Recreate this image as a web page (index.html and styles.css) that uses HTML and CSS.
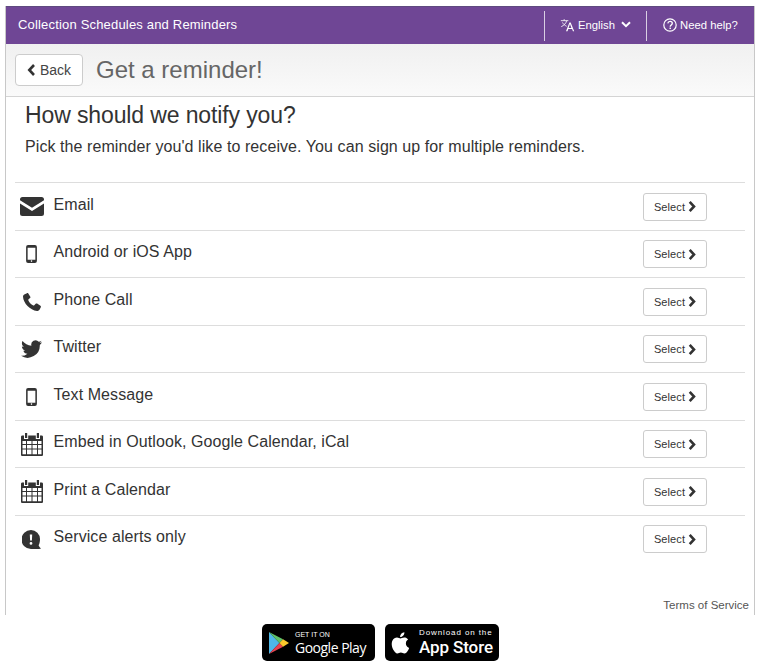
FILE: index.html
```html
<!DOCTYPE html>
<html lang="en">
<head>
<meta charset="utf-8">
<title>Get a reminder</title>
<link rel="stylesheet" href="styles.css">
</head>
<body>
<svg class="defs" width="0" height="0" aria-hidden="true">
  <symbol id="phone-device" viewBox="0 0 12 20"><path fill-rule="evenodd" d="M2.2 0h7.6A2.2 2.2 0 0 1 12 2.2v15.6A2.2 2.2 0 0 1 9.800 20H2.200A2.200 2.200 0 0 1 0 17.800V2.200A2.200 2.200 0 0 1 2.200 0ZM1.700 3v13.300h8.600V3ZM6 17a.9.900 0 1 0 0 1.800A.9.900 0 0 0 6 17Z"/></symbol>
</svg>

<main class="card">
  <header class="topbar">
    <span class="brand">Collection Schedules and Reminders</span>
    <div class="topnav">
      <span class="topnav-item lang">
        <svg class="ico-lang" viewBox="0 0 18 16"><g fill="none" stroke="#fff" stroke-width="1"><path d="M1 2.800h9M5 1v1.800M8 2.800C7.300 6 4.800 8.500 1.500 10M3 5c1 2 2.800 3.500 5 4.500"/></g><path fill="#fff" d="M11.300 5h1.500l4.200 10.500h-1.500l-1-2.700h-4.500l-1 2.700H7.200Zm.7 1.800-1.700 4.800h3.400Z"/></svg>
        English
        <svg class="ico-chev" viewBox="0 0 10 7"><path d="M1 1.300 5 5.200l4-3.900" fill="none" stroke="#fff" stroke-width="2"/></svg>
      </span>
      <span class="topnav-item help">
        <svg class="ico-help" viewBox="0 0 14 14"><circle cx="7" cy="7" r="6.200" fill="none" stroke="#fff" stroke-width="1.200"/><path d="M4.800 5.300C5 3.900 6 3.300 7.100 3.300c1.300 0 2.200.8 2.200 1.900 0 1.700-2.100 1.800-2.100 3.500" fill="none" stroke="#fff" stroke-width="1.300"/><rect x="6.500" y="9.600" width="1.400" height="1.400" fill="#fff"/></svg>
        Need help?
      </span>
    </div>
  </header>

  <div class="subbar">
    <a class="back-btn"><svg class="ico-back" viewBox="0 0 8 12"><path d="M6.500 1 1.800 6l4.700 5" fill="none" stroke="#333" stroke-width="2.600"/></svg>Back</a>
    <h1 class="page-title">Get a reminder!</h1>
  </div>

  <section class="content">
    <h2 class="question">How should we notify you?</h2>
    <p class="lead">Pick the reminder you'd like to receive. You can sign up for multiple reminders.</p>

    <ul class="options">
      <li class="option">
        <span class="opt-icon"><svg class="i-mail" viewBox="0 0 24 19"><path d="M2.500 0h19A2.500 2.500 0 0 1 24 2.500v.7l-12 7.600L0 3.200v-.7A2.500 2.500 0 0 1 2.500 0Z"/><path d="M0 6.400l12 7.500 12-7.500v10.100a2.500 2.500 0 0 1-2.500 2.500h-19A2.500 2.500 0 0 1 0 16.500Z"/></svg></span>
        <span class="opt-label">Email</span>
        <a class="select-btn">Select<svg class="ico-sel" viewBox="0 0 8 12"><path d="M1.500 1 6.200 6l-4.700 5" fill="none" stroke="#333" stroke-width="2.800"/></svg></a>
      </li>
      <li class="option">
        <span class="opt-icon"><svg class="i-device"><use href="#phone-device"/></svg></span>
        <span class="opt-label">Android or iOS App</span>
        <a class="select-btn">Select<svg class="ico-sel" viewBox="0 0 8 12"><path d="M1.500 1 6.200 6l-4.700 5" fill="none" stroke="#333" stroke-width="2.800"/></svg></a>
      </li>
      <li class="option">
        <span class="opt-icon"><svg class="i-phone" viewBox="0 0 19 19"><path d="M4.200.2 1.300 1.500C.3 2 0 3 0 4c.4 6.800 7.500 14.300 14.800 15 1.100.1 2-.3 2.600-1.200l1.400-2.700c.3-.6.100-1.200-.4-1.600l-3.500-2.300c-.5-.3-1.100-.3-1.500.2l-1.500 1.600c-.3.300-.6.300-1 .2C8.300 12 6.400 9.800 5.600 7.700c-.1-.4 0-.7.300-1l1.500-1.300c.5-.4.600-1 .3-1.500L5.600.6C5.300.1 4.700 0 4.200.2Z"/></svg></span>
        <span class="opt-label">Phone Call</span>
        <a class="select-btn">Select<svg class="ico-sel" viewBox="0 0 8 12"><path d="M1.500 1 6.200 6l-4.700 5" fill="none" stroke="#333" stroke-width="2.800"/></svg></a>
      </li>
      <li class="option">
        <span class="opt-icon"><svg class="i-twitter" viewBox="0 0 24 20"><path d="M24 2.400c-.9.400-1.800.7-2.800.8 1-.6 1.800-1.600 2.200-2.700-1 .6-2 1-3.100 1.200A4.900 4.900 0 0 0 11.900 6.200C7.800 6 4.200 4 1.700.9.400 3.100 1 6 3.200 7.500c-.8 0-1.600-.2-2.200-.6 0 2.300 1.600 4.400 3.900 4.900-.7.200-1.500.2-2.200.1.600 2 2.400 3.400 4.600 3.400A9.900 9.900 0 0 1 0 17.800 14 14 0 0 0 21.500 5.400c1-.7 1.800-1.700 2.500-3Z"/></svg></span>
        <span class="opt-label">Twitter</span>
        <a class="select-btn">Select<svg class="ico-sel" viewBox="0 0 8 12"><path d="M1.500 1 6.200 6l-4.700 5" fill="none" stroke="#333" stroke-width="2.800"/></svg></a>
      </li>
      <li class="option">
        <span class="opt-icon"><svg class="i-device"><use href="#phone-device"/></svg></span>
        <span class="opt-label">Text Message</span>
        <a class="select-btn">Select<svg class="ico-sel" viewBox="0 0 8 12"><path d="M1.500 1 6.200 6l-4.700 5" fill="none" stroke="#333" stroke-width="2.800"/></svg></a>
      </li>
      <li class="option">
        <span class="opt-icon"><svg class="i-cal" viewBox="0 0 22 23"><path d="M4 0h2.200v5H4zM15.800 0H18v5h-2.200z"/><path fill-rule="evenodd" d="M1.300 2.500H3V6h4.200V2.500h7.600V6H19V2.500h1.700c.7 0 1.300.6 1.300 1.300v17.900c0 .7-.6 1.300-1.300 1.300H1.300C.6 23 0 22.400 0 21.700V3.800c0-.7.600-1.300 1.300-1.300ZM1.500 8v3h3.500V8Zm4.500 0v3h4.500V8Zm5.500 0v3H16V8Zm5.500 0v3h3.500V8ZM1.500 12v3.500h3.500V12Zm4.500 0v3.500h4.500V12Zm5.500 0v3.500H16V12Zm5.500 0v3.500h3.500V12ZM1.500 16.500v4.800h3.500v-4.800Zm4.500 0v4.800h4.500v-4.800Zm5.500 0v4.800H16v-4.800Zm5.500 0v4.800h3.500v-4.800Z"/></svg></span>
        <span class="opt-label">Embed in Outlook, Google Calendar, iCal</span>
        <a class="select-btn">Select<svg class="ico-sel" viewBox="0 0 8 12"><path d="M1.500 1 6.200 6l-4.700 5" fill="none" stroke="#333" stroke-width="2.800"/></svg></a>
      </li>
      <li class="option">
        <span class="opt-icon"><svg class="i-cal" viewBox="0 0 22 23"><path d="M4 0h2.200v5H4zM15.800 0H18v5h-2.200z"/><path fill-rule="evenodd" d="M1.300 2.500H3V6h4.200V2.500h7.600V6H19V2.500h1.700c.7 0 1.300.6 1.300 1.300v17.900c0 .7-.6 1.300-1.300 1.300H1.300C.6 23 0 22.400 0 21.700V3.800c0-.7.600-1.300 1.300-1.300ZM1.500 8v3h3.500V8Zm4.500 0v3h4.500V8Zm5.500 0v3H16V8Zm5.500 0v3h3.500V8ZM1.500 12v3.500h3.500V12Zm4.500 0v3.500h4.500V12Zm5.500 0v3.500H16V12Zm5.500 0v3.500h3.500V12ZM1.500 16.500v4.800h3.500v-4.800Zm4.500 0v4.800h4.500v-4.800Zm5.500 0v4.800H16v-4.800Zm5.500 0v4.800h3.500v-4.800Z"/></svg></span>
        <span class="opt-label">Print a Calendar</span>
        <a class="select-btn">Select<svg class="ico-sel" viewBox="0 0 8 12"><path d="M1.500 1 6.200 6l-4.700 5" fill="none" stroke="#333" stroke-width="2.800"/></svg></a>
      </li>
      <li class="option">
        <span class="opt-icon"><svg class="i-alert" viewBox="0 0 19 19"><path fill-rule="evenodd" d="M9 0a9 9 0 0 1 9 9v0c0 2.300-.4 4.500-1.400 6.300.4 1 1.300 2.300 2.400 3.200-.3.300-1 .5-2 .5H9A9 9 0 0 1 9 0Zm-1.200 4.500.3 6h1.800l.3-6ZM9 12a1.400 1.400 0 1 0 0 2.800A1.400 1.400 0 0 0 9 12Z"/></svg></span>
        <span class="opt-label">Service alerts only</span>
        <a class="select-btn">Select<svg class="ico-sel" viewBox="0 0 8 12"><path d="M1.500 1 6.200 6l-4.700 5" fill="none" stroke="#333" stroke-width="2.800"/></svg></a>
      </li>
    </ul>
  </section>

  <footer class="terms">Terms of Service</footer>
</main>

<div class="stores">
  <a class="badge badge-play">
    <svg class="play-logo" viewBox="0 0 22 24">
      <path fill="#4fb8e8" d="M0 0v24L11.500 12Z"/>
      <path fill="#5fc26a" d="M0 0 11.500 12 15.500 8Z"/>
      <path fill="#e8434f" d="M0 24 11.500 12l4 4Z"/>
      <path fill="#fbc92c" d="M15.500 8 22 12l-6.500 4-4-4Z"/>
    </svg>
    <span class="badge-text">
      <span class="play-small">GET IT ON</span>
      <span class="play-big">Google Play</span>
    </span>
  </a>
  <a class="badge badge-apple">
    <svg class="apple-logo" viewBox="2 0 16 20"><path fill="#fff" d="M14.700 10.600c0-2 1.700-3 1.800-3-1-1.400-2.500-1.600-3-1.600-1.300-.1-2.500.8-3.100.8-.7 0-1.700-.8-2.800-.8-1.400 0-2.700.8-3.500 2.100-1.500 2.600-.4 6.400 1.100 8.500.7 1 1.600 2.200 2.700 2.100 1.100 0 1.500-.7 2.800-.7s1.700.7 2.800.7c1.200 0 1.900-1 2.600-2 .8-1.200 1.200-2.300 1.200-2.400 0 0-2.600-.9-2.600-3.700ZM12.600 4.400c.6-.7 1-1.700.9-2.700-.9 0-1.900.6-2.500 1.300-.5.600-1 1.600-.9 2.600 1 .1 2-.5 2.500-1.200Z"/></svg>
    <span class="badge-text">
      <span class="apple-small">Download on the</span>
      <span class="apple-big">App Store</span>
    </span>
  </a>
</div>
</body>
</html>
```

FILE: styles.css
```css
* { box-sizing: border-box; }
html, body { margin: 0; padding: 0; background: #fff; }
body {
  font-family: "Liberation Sans", Arial, sans-serif;
  color: #333;
  padding-top: 6px;
}
.defs { position: absolute; }

.card {
  width: 750px;
  height: 609px;
  margin-left: 5px;
  border: 1px solid #c8c8c8;
  border-bottom: 0;
  border-top: 0;
  display: flex;
  flex-direction: column;
}

.topbar {
  height: 38px;
  background: #6f4695;
  border-top: 1px solid #5f4a80;
  color: #fff;
  display: flex;
  align-items: center;
  justify-content: space-between;
  padding-left: 12px;
  flex: none;
}
.brand { font-size: 13px; letter-spacing: .18px; padding-bottom: 2px; }
.topnav { display: flex; height: 30px; font-size: 11.3px; }
.topnav-item {
  display: flex;
  align-items: center;
  border-left: 1px solid #d9cfe3;
  padding-bottom: 2px;
}
.lang { width: 102px; padding-left: 15px; gap: 3px; }
.help { width: 108px; padding-left: 16px; gap: 3px; }
.ico-lang { width: 15px; height: 14px; }
.ico-chev { width: 10px; height: 7px; margin-left: 3px; }
.ico-help { width: 14px; height: 14px; }

.subbar {
  height: 53px;
  flex: none;
  background: linear-gradient(#f0f0f0, #fafafa);
  border-bottom: 1px solid #d4d4d4;
  display: flex;
  align-items: center;
  padding: 0 0 1px 9px;
  gap: 13px;
}
.back-btn {
  width: 68px;
  height: 32px;
  background: #fff;
  border: 1px solid #ccc;
  border-radius: 4px;
  font-size: 14px;
  color: #444;
  display: flex;
  align-items: center;
  justify-content: center;
  gap: 4px;
}
.ico-back { width: 9px; height: 12px; }
.page-title {
  margin: 0;
  font-size: 24px;
  font-weight: 400;
  color: #666;
}

.content { padding: 0 9px; flex: 1; }
.question {
  margin: 3px 0 0 10px;
  font-size: 23px;
  letter-spacing: -.12px;
  line-height: 30px;
  font-weight: 400;
  color: #333;
}
.lead {
  margin: 6px 0 0 10px;
  font-size: 16px;
  letter-spacing: .08px;
  line-height: 22px;
  color: #333;
}

.options {
  list-style: none;
  margin: 24px 0 0;
  padding: 0;
}
.option {
  height: 47.500px;
  border-top: 1px solid #ddd;
  display: flex;
  align-items: flex-start;
}
.opt-icon {
  width: 38.500px;
  height: 46px;
  flex: none;
  display: flex;
  align-items: center;
  justify-content: center;
  padding: 1px 5px 0 0;
}
.opt-icon svg { fill: #333; display: block; }
.i-mail { width: 24px; height: 19px; }
.i-device { width: 11px; height: 18px; }
.i-phone { width: 18px; height: 18px; }
.i-twitter { width: 21px; height: 18px; }
.i-cal { width: 22px; height: 23px; }
.i-alert { width: 19px; height: 19px; }

.opt-label {
  flex: 1;
  font-size: 16px;
  letter-spacing: .08px;
  line-height: 20px;
  padding-top: 11.600px;
  color: #333;
}
.select-btn {
  width: 64px;
  height: 28px;
  margin: 9.700px 38px 0 0;
  background: #fff;
  border: 1px solid #ccc;
  border-radius: 3px;
  font-size: 11px;
  letter-spacing: .1px;
  color: #333;
  display: flex;
  align-items: center;
  justify-content: center;
  gap: 3px;
}
.ico-sel { width: 8px; height: 11px; }

.terms {
  flex: none;
  text-align: right;
  font-size: 11.500px;
  color: #555;
  padding: 0 5px 4px 0;
}

.stores {
  display: flex;
  justify-content: center;
  gap: 10px;
  margin-top: 9px;
  padding-left: 2px;
}
.badge {
  height: 37px;
  background: #000;
  border-radius: 5px;
  color: #fff;
  display: flex;
  align-items: center;
}
.badge-play { width: 113px; padding-left: 7px; gap: 6px; }
.badge-apple { width: 114px; padding-left: 5px; gap: 9px; }
.badge-text { display: flex; flex-direction: column; }
.play-logo { width: 20px; height: 22px; flex: none; }
.apple-logo { width: 20px; height: 25px; flex: none; }
.play-small { font-size: 7px; line-height: 9px; }
.play-big { font-size: 14px; line-height: 17px; font-family: "Open Sans", sans-serif; letter-spacing: -.5px; }
.apple-small { font-size: 8px; line-height: 9.500px; letter-spacing: .9px; }
.apple-big { font-size: 17px; line-height: 20px; font-family: Roboto, sans-serif; font-weight: 500; letter-spacing: -.1px; }
```
